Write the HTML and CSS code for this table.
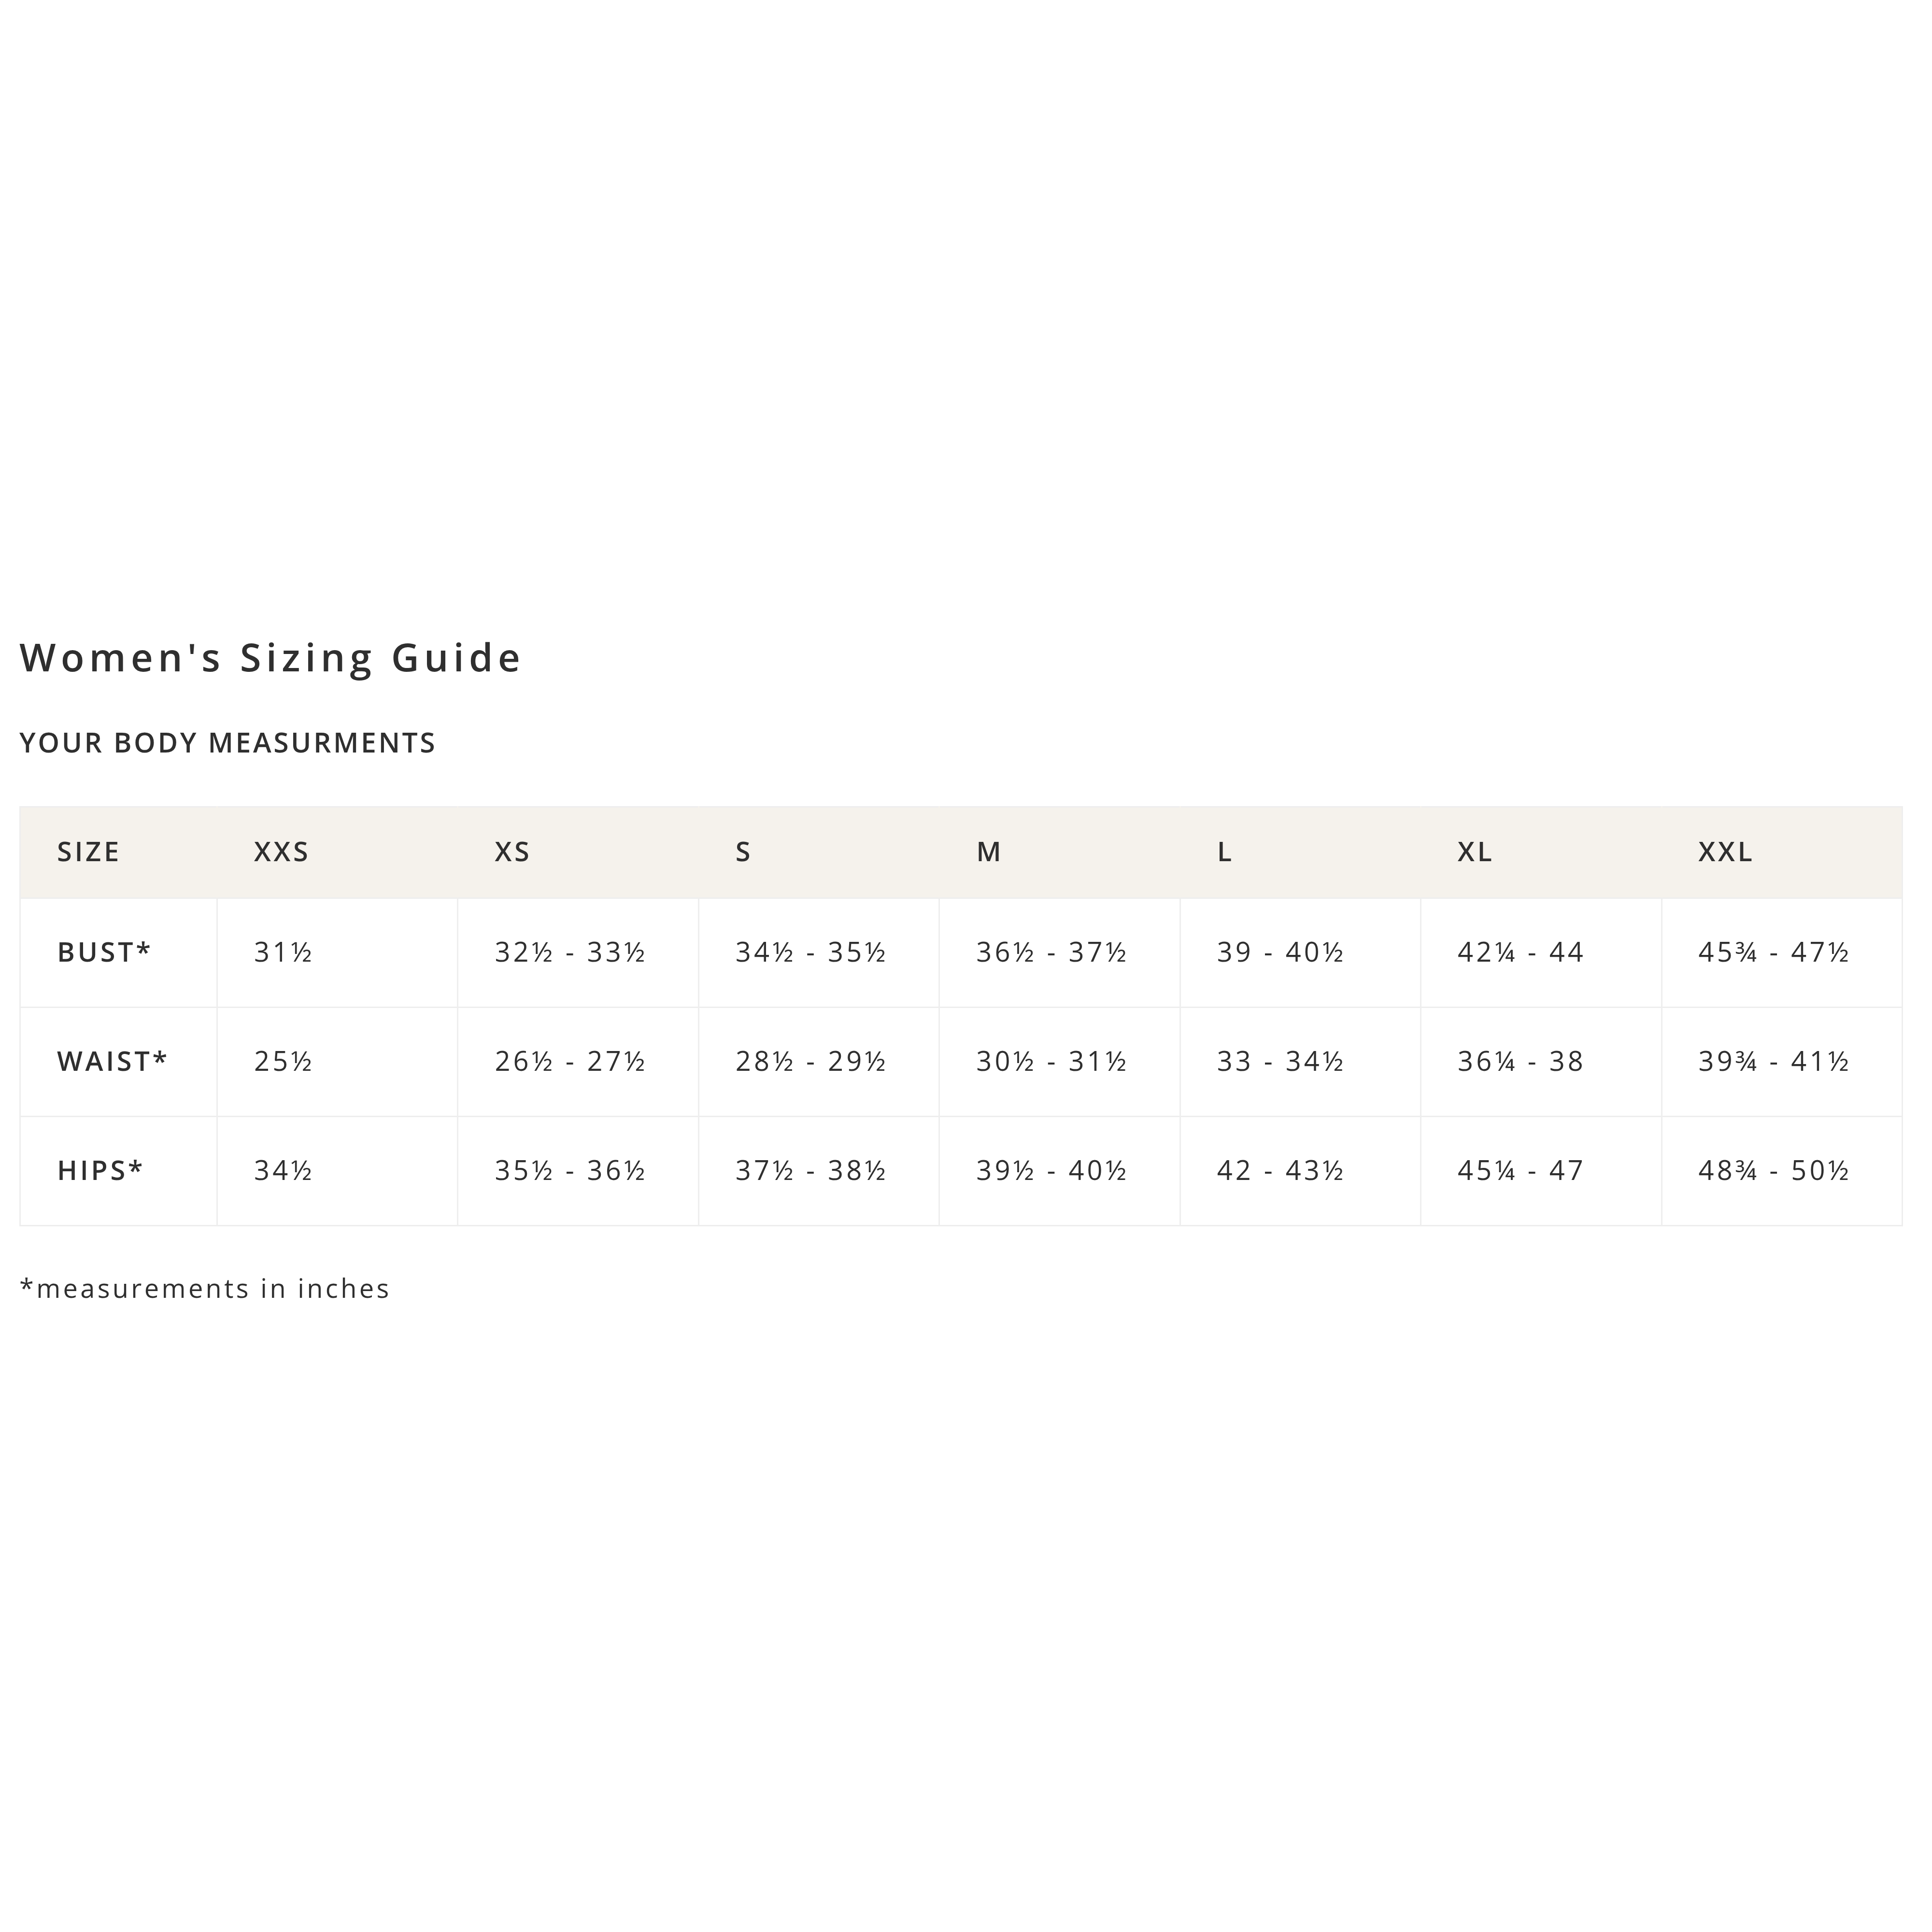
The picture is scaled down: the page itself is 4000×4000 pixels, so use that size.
FILE: index.html
```html
<!DOCTYPE html>
<html lang="en">
<head>
<meta charset="utf-8">
<title>Women's Sizing Guide</title>
<link rel="stylesheet" href="styles.css">
</head>
<body>
<main class="guide">
  <h1 class="guide-title">Women's Sizing Guide</h1>
  <h2 class="guide-subtitle">YOUR BODY MEASURMENTS</h2>
  <table class="size-table">
    <colgroup>
      <col class="col-label">
      <col><col><col><col><col><col><col>
    </colgroup>
    <thead>
      <tr>
        <th>SIZE</th><th>XXS</th><th>XS</th><th>S</th><th>M</th><th>L</th><th>XL</th><th>XXL</th>
      </tr>
    </thead>
    <tbody>
      <tr>
        <td class="row-label">BUST*</td>
        <td>31½</td><td>32½ - 33½</td><td>34½ - 35½</td><td>36½ - 37½</td><td>39 - 40½</td><td>42¼ - 44</td><td>45¾ - 47½</td>
      </tr>
      <tr>
        <td class="row-label">WAIST*</td>
        <td>25½</td><td>26½ - 27½</td><td>28½ - 29½</td><td>30½ - 31½</td><td>33 - 34½</td><td>36¼ - 38</td><td>39¾ - 41½</td>
      </tr>
      <tr>
        <td class="row-label">HIPS*</td>
        <td>34½</td><td>35½ - 36½</td><td>37½ - 38½</td><td>39½ - 40½</td><td>42 - 43½</td><td>45¼ - 47</td><td>48¾ - 50½</td>
      </tr>
    </tbody>
  </table>
  <p class="guide-note">*measurements in inches</p>
</main>
</body>
</html>
```
FILE: styles.css
```css
html, body {
  margin: 0;
  padding: 0;
  background: #ffffff;
}

body {
  font-family: "Open Sans", "Noto Sans", "Liberation Sans", sans-serif;
  color: #2f2f2f;
}

.guide {
  padding: 1311px 60px 400px 40px;
}

.guide-title {
  margin: 0;
  font-size: 80px;
  line-height: 1.2;
  font-weight: 600;
  letter-spacing: 0.125em;
}

.guide-subtitle {
  margin: 95px 0 0;
  font-size: 57px;
  line-height: 1.2;
  font-weight: 600;
  letter-spacing: 0.08em;
}

.size-table {
  margin-top: 99px;
  width: 3900px;
  table-layout: fixed;
  border-collapse: collapse;
  border: 3px solid #eeeeee;
}

.col-label {
  width: 408px;
}

.size-table th,
.size-table td {
  padding: 0 0 7px 75px;
  text-align: left;
  vertical-align: middle;
  font-size: 56px;
  line-height: 1.2;
  letter-spacing: 0.1em;
  white-space: nowrap;
}

.size-table th {
  height: 179px;
  background: #f5f2ec;
  font-weight: 600;
  border-top: 3px solid #eeeeee;
  border-bottom: 3px solid #eeeeee;
  border-left: 3px solid #f5f2ec;
  border-right: 3px solid #f5f2ec;
}

.size-table th:first-child {
  border-left-color: #eeeeee;
}

.size-table th:last-child {
  border-right-color: #eeeeee;
}

.size-table td {
  height: 216px;
  font-weight: 400;
  letter-spacing: 0.11em;
  border: 3px solid #eeeeee;
}

.size-table td.row-label {
  font-weight: 600;
  letter-spacing: 0.1em;
}

.guide-note {
  margin: 95px 0 0;
  font-size: 54px;
  line-height: 1.2;
  font-weight: 400;
  letter-spacing: 0.1em;
}
```
